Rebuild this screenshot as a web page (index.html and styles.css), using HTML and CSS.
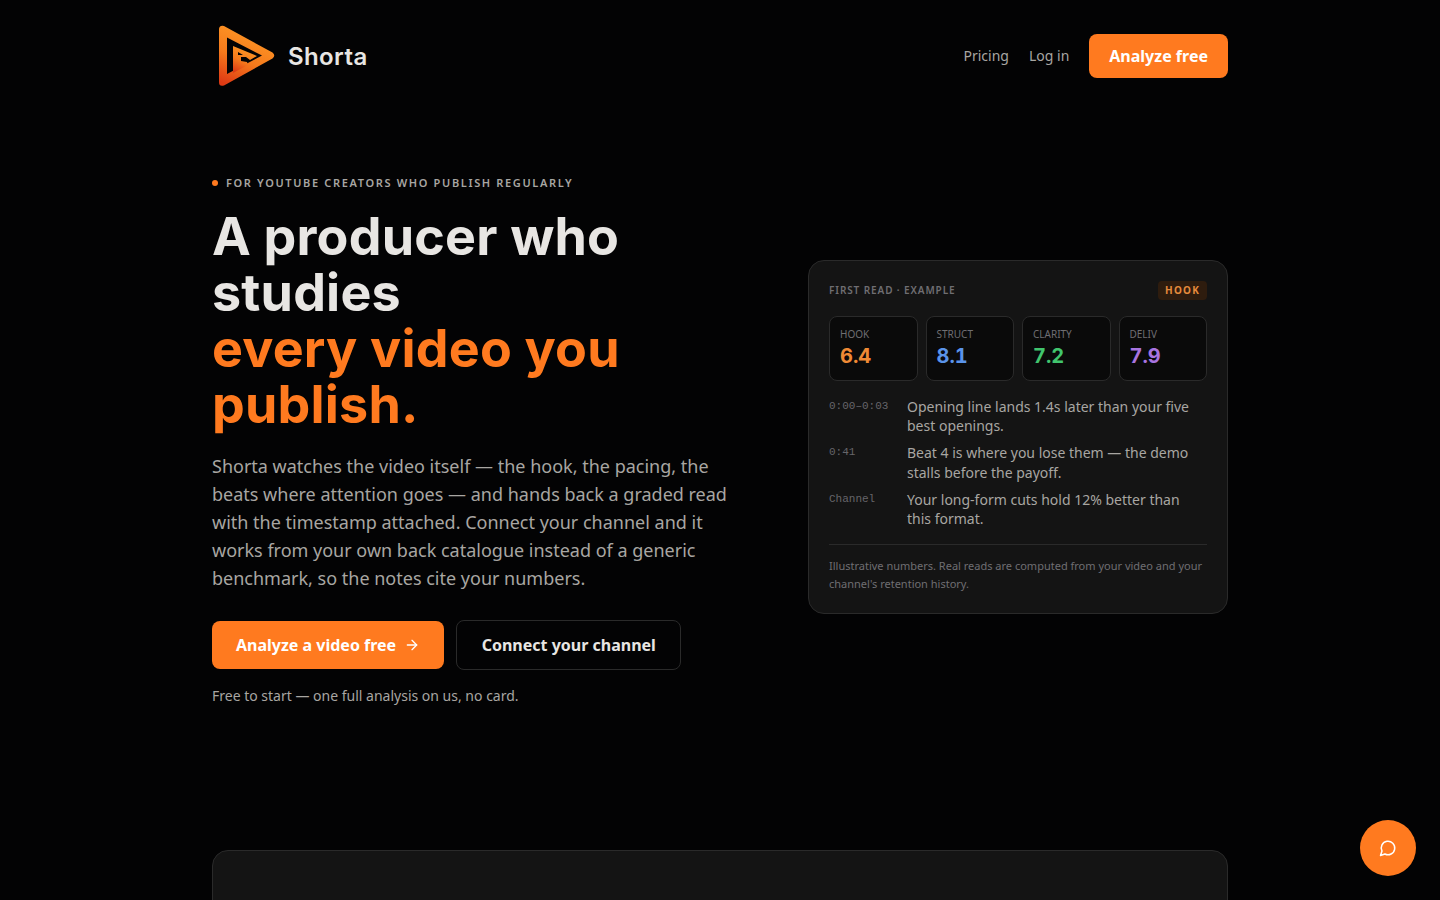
FILE: index.html
```html
<!DOCTYPE html>
<html lang="en">
  <head>
    <title>Shorta</title>
    <meta charset="utf-8">
    <meta name="viewport" content="width=device-width, initial-scale=1">
    <link rel="stylesheet" href="styles.css">
  </head>
  <body>
    <div class="page">

      <header class="nav">
        <a class="brand" href="#">
          <svg class="brand-mark" width="64" height="64" viewBox="0 0 64 64" aria-hidden="true">
            <defs>
              <linearGradient id="logo-grad" x1="0.6" y1="0" x2="0.2" y2="1">
                <stop offset="0" stop-color="#ff9a26"/>
                <stop offset="0.55" stop-color="#f57a1c"/>
                <stop offset="1" stop-color="#de3a14"/>
              </linearGradient>
            </defs>
            <path fill="url(#logo-grad)" fill-rule="evenodd" d="M10 2 L58.500 28.500 Q62 31.500 58.500 34.500 L10 61.500 Q5 63 5 58 L5 5 Q5.500 1 10 2 Z M13 13.500 L13 50 L48 31.500 Z"/>
            <path fill="url(#logo-grad)" fill-rule="evenodd" d="M19 22 L43 32 L36 36 L32 33 L27 33 L27 37 L33 38 L34 41 L19 49 Z M24 28 L24 31 L29 31 Z"/>
          </svg>
          <span class="brand-name">Shorta</span>
        </a>
        <nav class="nav-links">
          <a href="#">Pricing</a>
          <a href="#">Log in</a>
          <a class="nav-cta" href="#">Analyze free</a>
        </nav>
      </header>

      <main class="hero">
        <section class="hero-copy">
          <p class="eyebrow">For YouTube creators who publish regularly</p>
          <h1>A producer who studies <em>every video you publish.</em></h1>
          <p class="lede">Shorta watches the video itself — the hook, the pacing, the beats where attention goes — and hands back a graded read with the timestamp attached. Connect your channel and it works from your own back catalogue instead of a generic benchmark, so the notes cite your numbers.</p>
          <div class="actions">
            <a class="btn btn-primary" href="#">Analyze a video free
              <svg width="16" height="16" viewBox="0 0 24 24" fill="none" stroke="currentColor" stroke-width="2" stroke-linecap="round" stroke-linejoin="round" aria-hidden="true"><path d="M5 12h14"/><path d="m12 5 7 7-7 7"/></svg>
            </a>
            <a class="btn btn-ghost" href="#">Connect your channel</a>
          </div>
          <p class="fineprint">Free to start — one full analysis on us, no card.</p>
        </section>

        <aside class="read-card">
          <div class="read-head">
            <span class="read-title">First read · Example</span>
            <span class="read-tag">Hook</span>
          </div>
          <div class="scores">
            <div class="score"><span class="score-label">HOOK</span><span class="score-value orange">6.4</span></div>
            <div class="score"><span class="score-label">STRUCT</span><span class="score-value blue">8.1</span></div>
            <div class="score"><span class="score-label">CLARITY</span><span class="score-value green">7.2</span></div>
            <div class="score"><span class="score-label">DELIV</span><span class="score-value purple">7.9</span></div>
          </div>
          <ul class="notes">
            <li><code>0:00–0:03</code><span>Opening line lands 1.4s later than your five best openings.</span></li>
            <li><code>0:41</code><span>Beat 4 is where you lose them — the demo stalls before the payoff.</span></li>
            <li><code>Channel</code><span>Your long-form cuts hold 12% better than this format.</span></li>
          </ul>
          <p class="read-foot">Illustrative numbers. Real reads are computed from your video and your channel's retention history.</p>
        </aside>
      </main>

      <section class="next-panel"></section>
    </div>

    <button class="chat" type="button" aria-label="Open chat">
      <svg width="18" height="18" viewBox="0 0 24 24" fill="none" stroke="currentColor" stroke-width="2" stroke-linecap="round" stroke-linejoin="round"><path d="M7.900 20A9 9 0 1 0 4 16.100L2 22Z"/></svg>
    </button>
  </body>
</html>
```

FILE: styles.css
```css
html, body {
  margin: 0;
  height: 900px;
  overflow: hidden;
}

body {
  background-color: #030304;
  color: #e8e6e3;
  font-family: "Noto Sans", sans-serif;
}

a {
  color: inherit;
  text-decoration: none;
}

.page {
  margin: 0 auto;
  width: 1016px;
}

.nav {
  align-items: center;
  display: flex;
  height: 112px;
  justify-content: space-between;
}

.brand {
  align-items: center;
  display: flex;
  gap: 10px;
  padding-left: 2px;
}

.brand-mark {
  display: block;
}

.brand-name {
  color: #e8e6e3;
  font-family: Inter, sans-serif;
  font-size: 24px;
  font-weight: 600;
  letter-spacing: 0.4px;
}

.nav-links {
  align-items: center;
  color: #a8a6a2;
  display: flex;
  font-size: 14px;
  gap: 20px;
  line-height: 20px;
}

.nav-cta {
  background-color: #ff7a1f;
  border-radius: 8px;
  color: #fff;
  font-size: 16px;
  font-weight: 700;
  line-height: 44px;
  padding: 0 20px;
}

.hero {
  align-items: center;
  display: grid;
  gap: 80px;
  grid-template-columns: 516px 420px;
  padding-top: 56px;
}

.eyebrow {
  align-items: center;
  color: #a8a6a2;
  display: flex;
  font-size: 11px;
  font-weight: 600;
  gap: 8px;
  letter-spacing: 1.65px;
  line-height: 30px;
  margin: 0 0 11px 0;
  text-transform: uppercase;
}

.eyebrow::before {
  background-color: #ff7a1f;
  border-radius: 50%;
  content: "";
  height: 6px;
  width: 6px;
}

h1 {
  color: #e8e6e3;
  font-family: Inter, sans-serif;
  font-size: 52px;
  font-weight: 700;
  letter-spacing: 0.2px;
  line-height: 56px;
  margin: 0 0 19px 0;
}

h1 em {
  color: #ff7a1f;
  display: block;
  font-style: normal;
}

.lede {
  color: #a8a6a2;
  font-size: 18px;
  line-height: 28px;
  margin: 0 0 28px 0;
}

.actions {
  align-items: center;
  display: flex;
  gap: 12px;
  margin-bottom: 16px;
}

.btn {
  align-items: center;
  border-radius: 8px;
  display: flex;
  font-size: 16px;
  font-weight: 700;
  gap: 8px;
  box-sizing: border-box;
}

.btn-primary {
  background-color: #ff7a1f;
  color: #fff;
  height: 48px;
  padding: 0 24px;
}

.btn-ghost {
  border: 1px solid #2a2a2a;
  color: #e8e6e3;
  height: 50px;
  padding: 0 24.500px;
}

.fineprint {
  color: #a8a6a2;
  font-size: 14px;
  line-height: 20px;
  margin: 0;
}

.read-card {
  background-color: #141414;
  border: 1px solid #2a2a2a;
  border-radius: 16px;
  box-sizing: border-box;
  padding: 20px;
}

.read-head {
  align-items: center;
  display: flex;
  justify-content: space-between;
  margin-bottom: 16px;
}

.read-title {
  color: #6f6e72;
  font-size: 10px;
  font-weight: 600;
  letter-spacing: 0.9px;
  text-transform: uppercase;
}

.read-tag {
  background-color: #2e1c0e;
  border-radius: 4px;
  color: #e58a3c;
  font-size: 10px;
  font-weight: 700;
  letter-spacing: 1.2px;
  line-height: 19px;
  padding: 0 7px;
  text-transform: uppercase;
}

.scores {
  display: grid;
  gap: 8px;
  grid-template-columns: repeat(4, 1fr);
  margin-bottom: 16px;
}

.score {
  background-color: #0a0a0a;
  border: 1px solid #2a2a2a;
  border-radius: 8px;
  display: flex;
  flex-direction: column;
  padding: 10px;
}

.score-label {
  color: #6f6e72;
  font-size: 10px;
  line-height: 15px;
}

.score-value {
  font-family: Inter, sans-serif;
  font-size: 20px;
  font-variant-numeric: tabular-nums;
  font-weight: 700;
  line-height: 28px;
}

.orange { color: #f08a35; }
.blue { color: #5a94ea; }
.green { color: #41c56e; }
.purple { color: #a874e0; }

.notes {
  display: flex;
  flex-direction: column;
  gap: 7.300px;
  list-style: none;
  margin: 0;
  padding: 0;
}

.notes li {
  display: grid;
  gap: 12px;
  grid-template-columns: 66px 1fr;
}

.notes code {
  color: #66656a;
  font-family: "Liberation Mono", monospace;
  font-size: 11px;
  line-height: 19px;
}

.notes span {
  color: #a8a6a2;
  font-size: 14px;
  line-height: 19.600px;
}

.read-foot {
  border-top: 1px solid #2a2a2a;
  color: #6f6e72;
  font-size: 11px;
  line-height: 18px;
  margin: 15.400px 0 0 0;
  padding-top: 12px;
}

.next-panel {
  background-color: #141414;
  border: 1px solid #2a2a2a;
  border-radius: 16px;
  height: 200px;
  margin-top: 144px;
}

.chat {
  align-items: center;
  background-color: #ff7a1f;
  border: 0;
  border-radius: 50%;
  bottom: 24px;
  color: #fff;
  display: flex;
  height: 56px;
  justify-content: center;
  padding: 0;
  position: fixed;
  right: 24px;
  width: 56px;
}
```
